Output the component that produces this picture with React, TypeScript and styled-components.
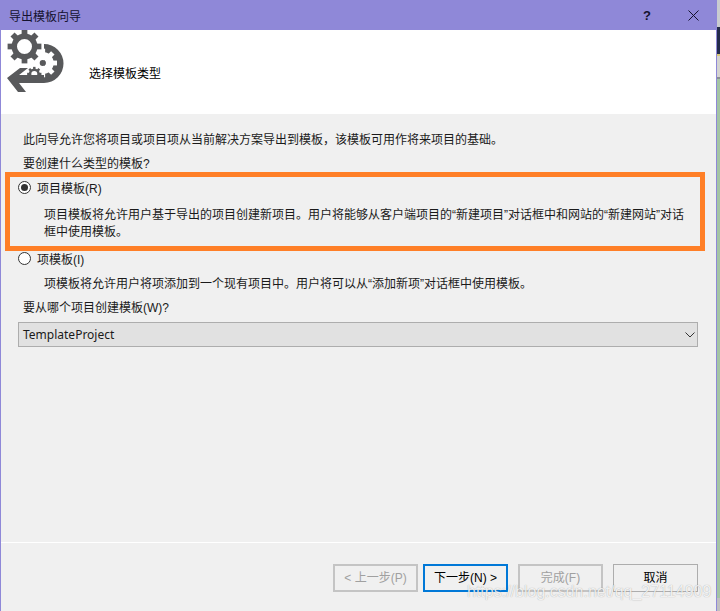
import * as React from "react";
import styled, { createGlobalStyle } from "styled-components";

const cjk = `"Liberation Sans", "Noto Sans CJK SC", sans-serif`;

const GlobalStyle = createGlobalStyle`
    html, body {
        margin: 0;
        padding: 0;
        background: #a3c4a4;
    }
    #root {
        width: 720px;
        height: 611px;
        overflow: hidden;
    }
`;

const Screen = styled.div`
    position: relative;
    display: flex;
    width: 720px;
    height: 611px;
    font-family: ${cjk};
    font-size: 12px;
    color: #1a1a1a;
`;

const Dialog = styled.div`
    display: flex;
    flex-direction: column;
    width: 717px;
    height: 611px;
    box-sizing: border-box;
    border-left: 1px solid #8f88d8;
    border-right: 1px solid #8f88d8;
    background: #f0f0f0;
`;

const TitleBar = styled.div`
    display: flex;
    align-items: center;
    height: 30px;
    flex: none;
    margin: 0 -1px;
    padding-left: 9px;
    background: #8f88d8;
    color: #14122e;
`;

const TitleText = styled.span`
    flex: 1;
`;

const HelpButton = styled.span`
    width: 46px;
    text-align: center;
    font-size: 13px;
    font-weight: bold;
`;

const CloseButton = styled.span`
    display: flex;
    justify-content: center;
    width: 46px;
    margin-right: 1px;
`;

const Header = styled.div`
    display: flex;
    align-items: center;
    flex: none;
    gap: 25px;
    height: 84px;
    padding-left: 5px;
    background: #ffffff;
    color: #000000;
`;

const HeaderIcon = styled.svg`
    width: 58px;
    height: 64px;
    align-self: flex-start;
`;

const Content = styled.div`
    flex: 1;
    display: flex;
    flex-direction: column;
    padding: 18px 18px 0 22px;
`;

const Line = styled.div<{ $indent?: number; $top?: number }>`
    line-height: 16px;
    margin-left: ${(p) => p.$indent ?? 0}px;
    margin-top: ${(p) => p.$top ?? 0}px;
`;

const RadioRow = styled.div<{ $top: number }>`
    display: flex;
    align-items: center;
    gap: 6px;
    height: 16px;
    margin-left: -5px;
    margin-top: ${(p) => p.$top}px;
`;

const RadioDot = styled.span<{ $checked?: boolean }>`
    display: flex;
    align-items: center;
    justify-content: center;
    width: 13px;
    height: 13px;
    box-sizing: border-box;
    border: 1px solid #333333;
    border-radius: 50%;
    background: #ffffff;

    &::after {
        content: "";
        display: ${(p) => (p.$checked ? "block" : "none")};
        width: 7px;
        height: 7px;
        border-radius: 50%;
        background: #333333;
    }
`;

const Select = styled.div`
    display: flex;
    align-items: center;
    justify-content: space-between;
    height: 25px;
    box-sizing: border-box;
    margin: 6px 0 0 -5px;
    padding: 0 2px 0 4px;
    border: 1px solid #adadad;
    background: #e1e1e1;
    font-family: "Noto Sans", ${cjk};
    font-size: 12px;
`;

const Footer = styled.div`
    display: flex;
    justify-content: flex-end;
    flex: none;
    gap: 10px;
    height: 69px;
    box-sizing: border-box;
    padding: 21px 18px 0 0;
    border-top: 1px solid #ffffff;
`;

const WizardButton = styled.div<{ $state?: "disabled" | "focused"; $joined?: boolean }>`
    display: flex;
    align-items: center;
    justify-content: center;
    width: 85px;
    height: 28px;
    box-sizing: border-box;
    line-height: 14px;
    margin-right: ${(p) => (p.$joined ? "-5px" : "0")};
    background: #f0f0f0;
    border: ${(p) =>
        p.$state === "disabled" ? "2px solid #c4c4c4" : p.$state === "focused" ? "2px solid #0078d7" : "1px solid #adadad"};
    color: ${(p) => (p.$state === "disabled" ? "#a0a0a0" : "#000000")};
`;

const RightEdge = styled.div`
    flex: 1;
    display: flex;
    flex-direction: column;
`;

const EdgeBand = styled.div<{ $color: string; $height?: number }>`
    background: ${(p) => p.$color};
    height: ${(p) => (p.$height ? `${p.$height}px` : "auto")};
    flex: ${(p) => (p.$height ? "none" : "1")};
`;

const Annotation = styled.div`
    position: absolute;
    left: 5px;
    top: 172px;
    width: 700px;
    height: 79px;
    box-sizing: border-box;
    border: 5px solid #ff7f27;
`;

const Watermark = styled.div`
    position: absolute;
    left: 467px;
    top: 586px;
    font-family: "Liberation Sans", sans-serif;
    font-size: 16px;
    line-height: 12px;
    color: rgba(255, 255, 255, 0.85);
    text-shadow: 0 0 1px rgba(0, 0, 0, 0.35);
`;

type GearProps = { cx: number; cy: number; r: number; hole: number; teeth: number; fill: string };

const Gear = ({ cx, cy, r, hole, teeth, fill }: GearProps) => (
    <g fill={fill}>
        {Array.from({ length: teeth }).map((_, i) => (
            <rect
                key={i}
                x={cx - r * 0.22}
                y={cy - r * 1.3}
                width={r * 0.44}
                height={r * 0.5}
                transform={`rotate(${(360 / teeth) * i} ${cx} ${cy})`}
            />
        ))}
        <path
            fillRule="evenodd"
            d={`M${cx - r} ${cy}a${r} ${r} 0 1 0 ${r * 2} 0a${r} ${r} 0 1 0 ${-r * 2} 0zM${cx - hole} ${cy}a${hole} ${hole} 0 1 1 ${hole * 2} 0a${hole} ${hole} 0 1 1 ${-hole * 2} 0z`}
        />
    </g>
);

const App = () => {
    return (
        <Screen>
            <GlobalStyle />
            <Dialog>
                <TitleBar>
                    <TitleText>导出模板向导</TitleText>
                    <HelpButton>?</HelpButton>
                    <CloseButton>
                        <svg width="11" height="11" viewBox="0 0 11 11">
                            <path d="M0.5 0.5L10.5 10.5M10.5 0.5L0.5 10.5" stroke="#14122e" strokeWidth="1" fill="none" />
                        </svg>
                    </CloseButton>
                </TitleBar>
                <Header>
                    <HeaderIcon viewBox="0 0 58 64">
                        {/* return arc behind the white gear */}
                        <path d="M38 14a19.500 19.500 0 0 1 0 39H28V45h10z" fill="#58595b" />
                        <Gear cx={36.700} cy={33} r={11} hole={3} teeth={8} fill="#ffffff" />
                        <circle cx={36.700} cy={33} r={3} fill="#58595b" />
                        <Gear cx={18.500} cy={16.500} r={13} hole={7.500} teeth={8} fill="#58595b" />
                        <circle cx={28.300} cy={44} r={8} fill="#ffffff" />
                        <path d="M1 48L14 38h8L13 45H38V53H13L20 62H12z" fill="#58595b" />
                        <Gear cx={28.300} cy={44} r={5.500} hole={3} teeth={8} fill="#58595b" />
                    </HeaderIcon>
                    <span>选择模板类型</span>
                </Header>
                <Content>
                    <Line>此向导允许您将项目或项目项从当前解决方案导出到模板，该模板可用作将来项目的基础。</Line>
                    <Line $top={8}>要创建什么类型的模板?</Line>
                    <RadioRow $top={7}>
                        <RadioDot $checked />
                        <span>项目模板(R)</span>
                    </RadioRow>
                    <Line $indent={21} $top={12}>
                        项目模板将允许用户基于导出的项目创建新项目。用户将能够从客户端项目的“新建项目”对话框中和网站的“新建网站”对话
                    </Line>
                    <Line $indent={21} $top={1}>
                        框中使用模板。
                    </Line>
                    <RadioRow $top={10}>
                        <RadioDot />
                        <span>项模板(I)</span>
                    </RadioRow>
                    <Line $indent={21} $top={10}>
                        项模板将允许用户将项添加到一个现有项目中。用户将可以从“添加新项”对话框中使用模板。
                    </Line>
                    <Line $top={8}>要从哪个项目创建模板(W)?</Line>
                    <Select>
                        <span>TemplateProject</span>
                        <svg width="10" height="6" viewBox="0 0 10 6">
                            <path d="M0.5 0.5L5 5L9.5 0.5" stroke="#333333" fill="none" />
                        </svg>
                    </Select>
                </Content>
                <Footer>
                    <WizardButton $state="disabled" $joined>
                        &lt; 上一步(P)
                    </WizardButton>
                    <WizardButton $state="focused">下一步(N) &gt;</WizardButton>
                    <WizardButton $state="disabled">完成(F)</WizardButton>
                    <WizardButton>取消</WizardButton>
                </Footer>
            </Dialog>
            <RightEdge>
                <EdgeBand $color="#c9ccd0" $height={27} />
                <EdgeBand $color="#242c4c" $height={27} />
                <EdgeBand $color="#d8c878" $height={2} />
                <EdgeBand $color="#d4d4d0" $height={21} />
                <EdgeBand $color="#8c9094" $height={2} />
                <EdgeBand $color="#a3c4a4" />
                <EdgeBand $color="#c0c0c0" $height={13} />
            </RightEdge>
            <Annotation />
            <Watermark>https://blog.csdn.net/qq_27114909</Watermark>
        </Screen>
    );
};

export default App;
